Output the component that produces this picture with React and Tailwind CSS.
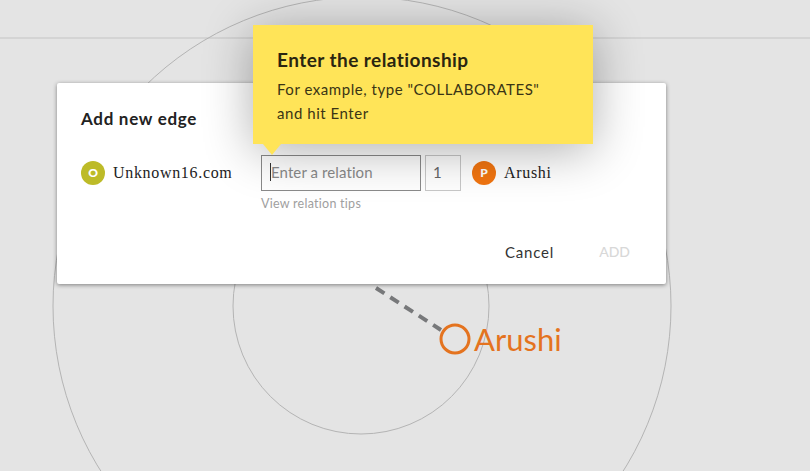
const uiFont = "font-['Lato','Noto_Sans',sans-serif]";

function GraphBackground() {
    return (
        <svg className="absolute inset-0" width="810" height="471" fill="none">
            <line x1="0" y1="38" x2="810" y2="38" stroke="#c4c4c4" />
            <circle cx="362" cy="306" r="309" stroke="#b4b4b4" />
            <circle cx="361" cy="306" r="128" stroke="#b4b4b4" />
            <line x1="376" y1="288" x2="441" y2="330" stroke="#77787a" strokeWidth="4" strokeDasharray="10 7" />
            <circle cx="455" cy="339" r="14" stroke="#e4731f" strokeWidth="3" fill="#e4e4e4" />
            <text x="474" y="351" fill="#e4731f" fontSize="31" fontFamily="Lato, sans-serif">Arushi</text>
        </svg>
    );
}

function Node({ letter, color, label }) {
    return (
        <div className="flex items-center gap-[8px]">
            <span className={`flex h-6 w-6 items-center justify-center rounded-full text-[12px] font-black text-white ${color}`}>
                {letter}
            </span>
            <span className="font-['Liberation_Serif',serif] text-[16px] tracking-[0.68px] text-[#222]">{label}</span>
        </div>
    );
}

export default function App() {
    return (
        <div className={`relative h-[471px] w-[810px] overflow-hidden bg-[#e4e4e4] pl-[57px] pt-[83px] ${uiFont}`}>
            <GraphBackground />

            <div className="relative h-[201px] w-[609px] rounded-[2px] bg-white pl-[24px] pt-[26px] shadow-[0_1px_4px_rgba(0,0,0,0.45)]">
                <h2 className="text-[17px] font-bold leading-[20px] tracking-[0.7px] text-[#222]">Add new edge</h2>

                <div className="mt-[26px] flex items-start">
                    <div className="mt-[6px] w-[180px]">
                        <Node letter="O" color="bg-[#bdbb28]" label="Unknown16.com" />
                    </div>
                    <div>
                        <div className="flex h-[36px] w-[160px] items-center border border-[#8a8a8a] pb-[2px] pl-[8px]">
                            <span className="h-[18px] w-px shrink-0 bg-[#333]" />
                            <span className="text-[15px] tracking-[0.1px] text-[#8a8a8a]">Enter a relation</span>
                        </div>
                        <p className="mt-[4px] text-[12.5px] tracking-[0.26px] text-[#a0a0a0]">View relation tips</p>
                    </div>
                    <div className="ml-[4px] flex h-[36px] w-[36px] items-center border border-[#c8c8c8] pb-[2px] pl-[7px] text-[15px] text-[#666]">1</div>
                    <div className="ml-[11px] mt-[6px]">
                        <Node letter="P" color="bg-[#f27510]" label="Arushi" />
                    </div>
                </div>

                <div className="absolute bottom-[21px] right-[36px] flex items-center gap-[45px]">
                    <button className="text-[15px] tracking-[0.8px] text-[#333]">Cancel</button>
                    <button className="text-[14px] font-medium text-[#d8d8d8]">ADD</button>
                </div>
            </div>

            <div className="absolute left-[253px] top-[25px] h-[119px] w-[340px] bg-[#ffe458] px-[24px] pt-[23px] shadow-[0_6px_50px_rgba(0,0,0,0.32)]">
                <h3 className="text-[19px] font-bold leading-[24px] tracking-[0.45px] text-[#2a2510]">Enter the relationship</h3>
                <p className="mt-[5px] text-[15px] leading-[25px] tracking-[0.54px] text-[#3a3415]">
                    For example, type "COLLABORATES"
                    <br />
                    <span className="relative -top-px">and hit Enter</span>
                </p>
                <span className="absolute left-[10px] top-full h-0 w-0 border-x-[9px] border-t-[11px] border-x-transparent border-t-[#ffe458]" />
            </div>
        </div>
    );
}
